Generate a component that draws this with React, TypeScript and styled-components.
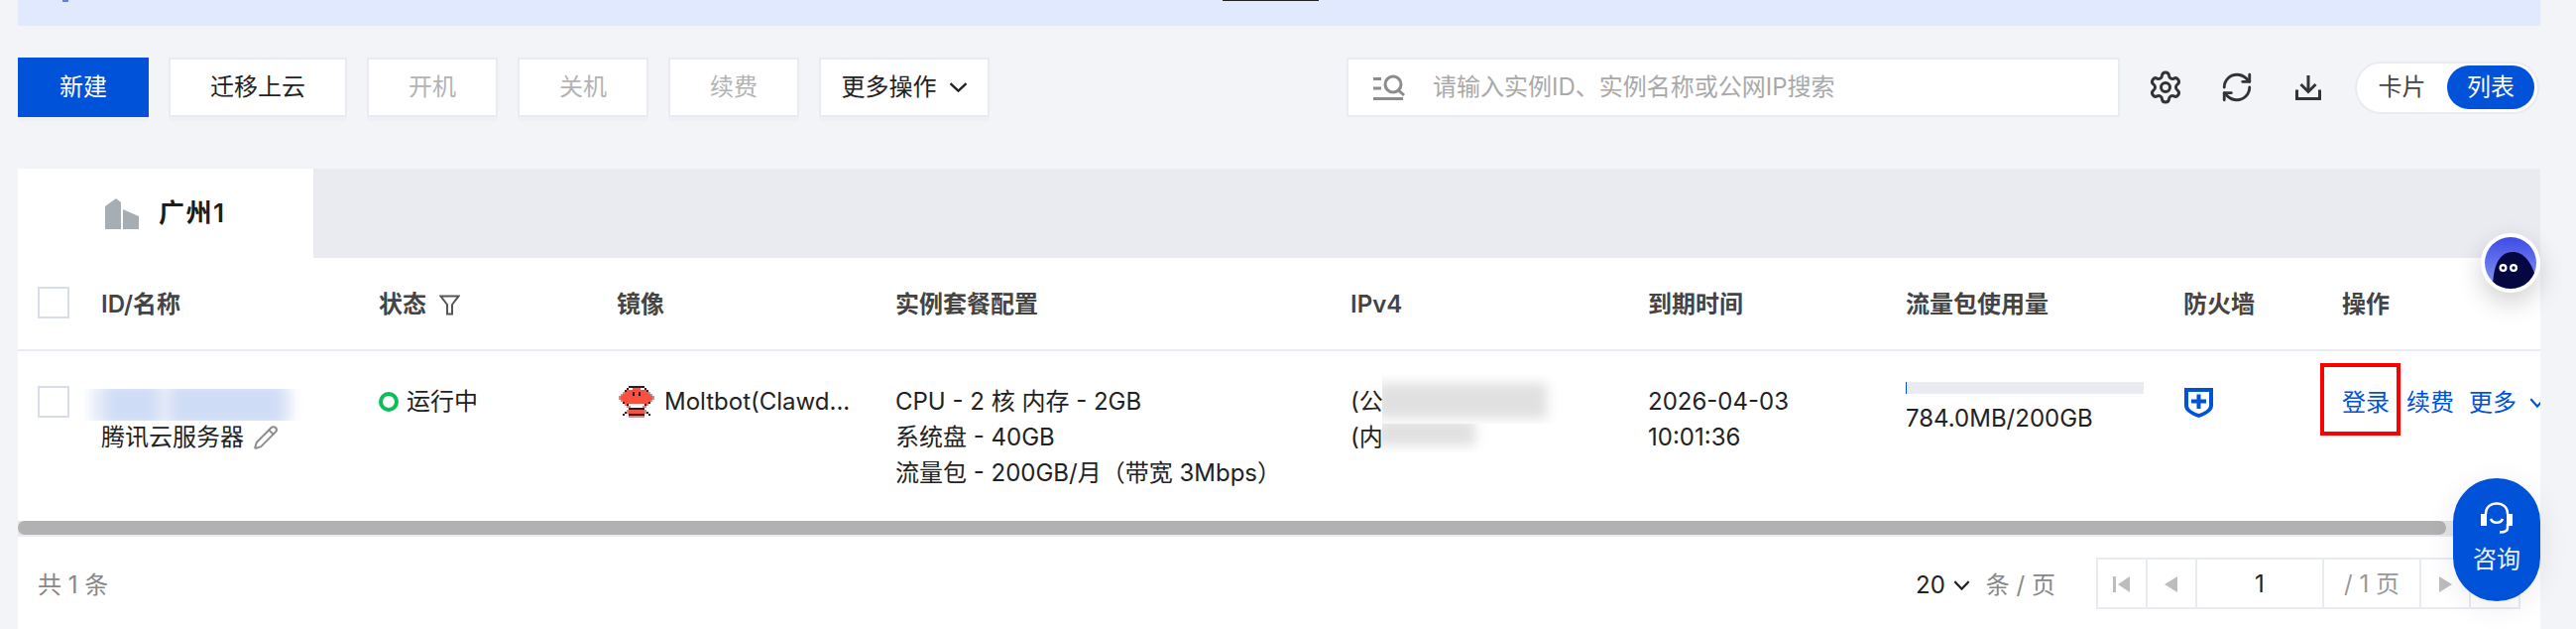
import React from "react";
import styled, { createGlobalStyle } from "styled-components";
import { Settings, RefreshCw, Pencil } from "lucide-react";

const Global = createGlobalStyle`
  html, body { margin: 0; padding: 0; background: #f3f4f8; overflow: hidden; }
  * { box-sizing: border-box; }
`;

const Page = styled.div`
  position: relative;
  width: 2598px;
  height: 634px;
  overflow: hidden;
  padding: 0 36px 0 18px;
  background: #f3f4f8;
  color: #222;
  font-family: "Inter", "Noto Sans CJK SC", sans-serif;
  font-size: 24px;
  line-height: 36px;
`;

const Banner = styled.div`
  display: flex;
  align-items: flex-start;
  height: 26px;
  background: #e0e9fe;
  padding-left: 45px;
`;
const BannerIcon = styled.span`
  width: 6px;
  height: 2px;
  background: #5b82ea;
`;
const BannerLink = styled.span`
  width: 97px;
  height: 1px;
  margin-left: 1164px;
  background: #222;
`;

const Toolbar = styled.div`
  display: flex;
  align-items: center;
  height: 60px;
  margin-top: 32px;
`;
const ButtonGroup = styled.div`
  display: flex;
  gap: 20px;
`;
const Button = styled.div<{ $w: number; $variant?: "primary" | "disabled" }>`
  display: flex;
  align-items: center;
  justify-content: center;
  gap: 12px;
  width: ${(p) => p.$w}px;
  height: 60px;
  border: 2px solid ${(p) => (p.$variant === "primary" ? "#0052d9" : "#e8ebf2")};
  background: ${(p) => (p.$variant === "primary" ? "#0052d9" : "#fff")};
  color: ${(p) => (p.$variant === "primary" ? "#fff" : p.$variant === "disabled" ? "#b3b3b3" : "#222")};
  box-shadow: 0 4px 0 #eff0f5;
`;
const SearchBox = styled.div`
  display: flex;
  align-items: center;
  gap: 28px;
  width: 780px;
  height: 60px;
  margin-left: auto;
  padding-left: 25px;
  border: 2px solid #e8ebf2;
  background: #fff;
  color: #a9a9a9;
`;
const IconCell = styled.div`
  display: flex;
  align-items: center;
  justify-content: center;
  width: 72px;
  height: 60px;
  color: #333;
`;
const IconRow = styled.div`
  display: flex;
  margin-left: 10px;
`;
const Toggle = styled.div`
  display: flex;
  align-items: center;
  width: 186px;
  height: 53px;
  margin: 0 1px 0 11px;
  padding-right: 3px;
  border: 2px solid #e8ebf2;
  border-radius: 27px;
  background: #fff;
`;
const ToggleItem = styled.div<{ $active?: boolean }>`
  display: flex;
  align-items: center;
  justify-content: center;
  flex: ${(p) => (p.$active ? "0 0 88px" : "1")};
  height: 44px;
  border-radius: 22px;
  background: ${(p) => (p.$active ? "#0052d9" : "transparent")};
  color: ${(p) => (p.$active ? "#fff" : "#444")};
`;

const Panel = styled.div`
  margin-top: 52px;
  background: #fff;
  height: 464px;
  overflow: hidden;
`;
const TabStrip = styled.div`
  height: 90px;
  background: #eaebf0;
`;
const Tab = styled.div`
  display: flex;
  align-items: center;
  gap: 20px;
  width: 298px;
  height: 90px;
  padding-left: 88px;
  background: #fff;
  font-size: 26px;
  font-weight: 600;
  letter-spacing: 1.5px;
  color: #1c1c1c;
`;

const columns = "64px 280px 240px 281px 459px 300px 260px 280px 160px 200px";
const HeaderRow = styled.div`
  display: grid;
  grid-template-columns: ${columns};
  align-items: center;
  height: 94px;
  padding: 0 0 0 20px;
  border-bottom: 2px solid #e8ebf2;
  font-weight: 600;
  color: #444;
`;
const HeaderCell = styled.div`
  display: flex;
  align-items: center;
  gap: 13px;
  padding-top: 2px;
`;
const Check = styled.div`
  width: 32px;
  height: 32px;
  border: 2px solid #d8dee9;
  background: #fff;
`;
const HeaderCheck = styled(Check)`
  margin-top: -3px;
`;
const DataRow = styled.div`
  display: grid;
  grid-template-columns: ${columns};
  align-items: start;
  height: 171px;
  padding: 33px 0 0 20px;
`;
const CheckWrap = styled.div`
  padding-top: 2px;
`;
const Patched = styled.div`
  position: relative;
  height: 36px;
`;
const BlurPatch = styled.div<{ $l: number; $t: number; $w: number; $h: number }>`
  position: absolute;
  left: ${(p) => p.$l}px;
  top: ${(p) => p.$t}px;
  width: ${(p) => p.$w}px;
  height: ${(p) => p.$h}px;
  overflow: hidden;
`;
const Blob = styled.div<{ $l: number; $t: number; $w: number; $h: number; $c: string }>`
  position: absolute;
  left: ${(p) => p.$l}px;
  top: ${(p) => p.$t}px;
  width: ${(p) => p.$w}px;
  height: ${(p) => p.$h}px;
  background: ${(p) => p.$c};
  filter: blur(6px);
`;
const NameLine = styled.div`
  display: flex;
  align-items: center;
  gap: 9px;
  color: #222;
`;
const StatusCell = styled.div`
  display: flex;
  align-items: center;
  gap: 8px;
`;
const Ring = styled.span`
  width: 20px;
  height: 20px;
  border: 4px solid #0abf5b;
  border-radius: 50%;
`;
const ImageCell = styled.div`
  display: flex;
  align-items: center;
  gap: 10px;
  margin-left: 2px;
  white-space: nowrap;
`;
const UsageCell = styled.div`
  margin-top: -2px;
`;
const UsageBar = styled.div`
  width: 240px;
  height: 12px;
  background: #e9ebf1;
`;
const UsageFill = styled.div`
  height: 100%;
  background: #0052d9;
`;
const UsageText = styled.div`
  margin-top: 7px;
`;
const ShieldWrap = styled.div`
  padding: 4px 0 0 1px;
  line-height: 0;
`;
const Ops = styled.div`
  display: flex;
  align-items: center;
  margin-top: 1px;
  color: #0052d9;
`;
const OpLink = styled.span<{ $ml?: number }>`
  position: relative;
  margin-left: ${(p) => p.$ml ?? 0}px;
  white-space: nowrap;
`;
const LoginLink = styled(OpLink)`
  &::after {
    content: "";
    position: absolute;
    left: -22px;
    right: -11px;
    top: -22px;
    height: 65px;
    border: 4px solid #f00;
  }
`;
const MoreChevron = styled.span`
  display: flex;
  margin-left: 13px;
`;

const ScrollTrack = styled.div`
  height: 14px;
  background: #e4e4e4;
`;
const ScrollThumb = styled.div`
  width: 2449px;
  height: 14px;
  border-radius: 7px;
  background: #b1b1b1;
`;
const Footer = styled.div`
  display: flex;
  align-items: center;
  height: 95px;
  padding: 0 20px;
  border-top: 2px solid #e8ebf2;
`;
const Total = styled.div`
  padding-top: 5px;
  color: #888;
`;
const PageSize = styled.div`
  display: flex;
  align-items: center;
  gap: 8px;
  margin-left: auto;
  padding-top: 4px;
`;
const Unit = styled.span`
  margin-left: 8px;
  color: #888;
`;
const Pager = styled.div`
  display: flex;
  height: 52px;
  margin-left: 41px;
  border: 2px solid #e8ebf2;
`;
const PagerCell = styled.div<{ $w: number; $muted?: boolean }>`
  display: flex;
  align-items: center;
  justify-content: center;
  width: ${(p) => p.$w}px;
  padding-top: 2px;
  border-right: 2px solid #e8ebf2;
  color: ${(p) => (p.$muted ? "#999" : "#222")};
  &:last-child { border-right: 0; }
`;

const Avatar = styled.div`
  position: absolute;
  left: 2502px;
  top: 235px;
  width: 60px;
  height: 60px;
  padding: 4px;
  border-radius: 50%;
  background: #fff;
  box-shadow: 0 10px 26px rgba(0, 0, 0, 0.18);
  line-height: 0;
`;
const Consult = styled.div`
  position: absolute;
  left: 2474px;
  top: 482px;
  display: flex;
  flex-direction: column;
  align-items: center;
  width: 88px;
  height: 124px;
  padding-top: 24px;
  border-radius: 44px;
  background: #0052d9;
  color: #fff;
  box-shadow: 0 6px 30px rgba(0, 0, 0, 0.08);
`;
const ConsultText = styled.div`
  margin-top: 8px;
  color: #eef3ff;
`;

const pixels = [
  ".....dddddddd.....",
  "....dwwRRRRwwd....",
  "...dRRRRRRRRRRd...",
  "..pRRRRkRRkRRRRp..",
  ".pRRRRRkRRkRRRRRp.",
  "pRRRRRRRRRRRRRRRRp",
  "pRRRRRRRRRRRRRRRRp",
  ".pRRRRRRRRRRRRRRp.",
  "..dRRRRRRRRRRRRd..",
  "...pdwwwwwwwwdp...",
  "....ppwwwwwwpp....",
  ".....dddddddd.....",
  "....pRRRRRRRRp....",
  "...dpRRRRRRRRpd...",
  "..d..dddddddd..d..",
  ".....pppppppp.....",
];
const pixelColors: Record<string, string> = {
  d: "#4a1014",
  R: "#f9503f",
  w: "#ffffff",
  p: "#c58f8d",
  k: "#2a0b0b",
};
const PixelBot = () => (
  <svg width="36" height="33" viewBox="0 0 18 16.5" shapeRendering="crispEdges" style={{ display: "block" }}>
    {pixels.flatMap((row, y) =>
      row.split("").map((c, x) =>
        c === "." ? null : <rect key={`${x}-${y}`} x={x} y={y} width="1" height="1" fill={pixelColors[c]} />
      )
    )}
  </svg>
);

const Chevron = ({ w = 19, h = 10, c = "#222" }: { w?: number; h?: number; c?: string }) => (
  <svg width={w} height={h} viewBox="0 0 19 10" fill="none" stroke={c} strokeWidth="2.4" preserveAspectRatio="none">
    <path d="M1.5 1.2L9.5 8.6L17.5 1.2" />
  </svg>
);
const SearchIcon = () => (
  <svg width="32" height="26" viewBox="0 0 32 26" fill="none" stroke="#8c8c8c" strokeWidth="3">
    <path d="M0 4.5H8M0 14H8M0 24.5H30" />
    <circle cx="20" cy="10" r="8" />
    <path d="M25.5 16L31 21" />
  </svg>
);
const DownloadIcon = () => (
  <svg width="26" height="25" viewBox="0 0 26 25" fill="none" stroke="#333" strokeWidth="3">
    <path d="M13 0V16M5.5 9L13 16.5L20.5 9M1.5 14.5V23.5H24.5V14.5" />
  </svg>
);
const FilterIcon = () => (
  <svg width="21" height="21" viewBox="0 0 21 21" fill="none" stroke="#555" strokeWidth="2">
    <path d="M1.5 1.5H19.5L13 10V19.5H8V10Z" />
  </svg>
);
const BuildingIcon = () => (
  <svg width="34" height="31" viewBox="0 0 34 31" fill="#a6aeb3">
    <path d="M0 8L11 0L16 4V31H0Z" />
    <path d="M18 11L34 18V31H18Z" />
  </svg>
);
const ShieldIcon = () => (
  <svg width="29" height="30" viewBox="0 0 29 30">
    <path d="M0 0H29V18C29 24 20 28 14.5 30C9 28 0 24 0 18Z" fill="#0052d9" />
    <path d="M4 4H25V17.5C25 22 19 24.5 14.5 26C10 24.5 4 22 4 17.5Z" fill="#fff" />
    <path d="M12.5 6.5H16.5V11.5H22V15.5H16.5V21H12.5V15.5H7V11.5H12.5Z" fill="#0052d9" />
  </svg>
);
const PagerIcon = ({ kind }: { kind: "first" | "prev" | "next" | "last" }) => (
  <svg width="18" height="16" viewBox="0 0 18 16" fill="#bdbdbd">
    {kind === "first" && <path d="M0 0H3V16H0ZM17 0V16L5 8Z" />}
    {kind === "prev" && <path d="M15 0V16L2 8Z" />}
    {kind === "next" && <path d="M3 0V16L16 8Z" />}
    {kind === "last" && <path d="M15 0H18V16H15ZM1 0V16L13 8Z" />}
  </svg>
);
const AvatarArt = () => (
  <svg width="52" height="52" viewBox="0 0 52 52">
    <defs>
      <linearGradient id="av" x1="0" y1="0" x2="0" y2="1">
        <stop offset="0" stopColor="#3d4be6" />
        <stop offset="1" stopColor="#8a9cf2" />
      </linearGradient>
      <clipPath id="avc">
        <circle cx="26" cy="26" r="26" />
      </clipPath>
    </defs>
    <g clipPath="url(#avc)">
      <rect width="52" height="52" fill="url(#av)" />
      <path d="M8 52C8 30 14 15 28 15C42 15 49 30 53 46V52Z" fill="#050840" />
      <circle cx="18.5" cy="31" r="4" fill="#fff" />
      <circle cx="29" cy="31" r="4" fill="#fff" />
      <circle cx="18.5" cy="31" r="1.7" fill="#050840" />
      <circle cx="29" cy="31" r="1.7" fill="#050840" />
    </g>
  </svg>
);
const HeadsetIcon = () => (
  <svg width="32" height="32" viewBox="0 0 32 32" fill="none" stroke="#fff" strokeWidth="2.6">
    <path d="M5 12C5 5 10 1.5 16 1.5C22 1.5 27 5 27 12" />
    <path d="M27 22V26C27 29 24 30.5 19 30.5" />
    <path d="M10 17C12 22 20 22 22 17" />
    <rect x="0" y="12" width="6" height="12" fill="#fff" stroke="none" />
    <rect x="26" y="12" width="6" height="12" fill="#fff" stroke="none" />
  </svg>
);

export default function App() {
  return (
    <>
      <Global />
      <Page>
        <Banner>
          <BannerIcon />
          <BannerLink />
        </Banner>

        <Toolbar>
          <ButtonGroup>
            <Button $w={132} $variant="primary">新建</Button>
            <Button $w={180}>迁移上云</Button>
            <Button $w={132} $variant="disabled">开机</Button>
            <Button $w={132} $variant="disabled">关机</Button>
            <Button $w={132} $variant="disabled">续费</Button>
            <Button $w={172}>
              更多操作
              <Chevron />
            </Button>
          </ButtonGroup>
          <SearchBox>
            <SearchIcon />
            <span>请输入实例ID、实例名称或公网IP搜索</span>
          </SearchBox>
          <IconRow>
            <IconCell><Settings size={36} strokeWidth={2} /></IconCell>
            <IconCell><RefreshCw size={34} strokeWidth={2} /></IconCell>
            <IconCell><DownloadIcon /></IconCell>
          </IconRow>
          <Toggle>
            <ToggleItem>卡片</ToggleItem>
            <ToggleItem $active>列表</ToggleItem>
          </Toggle>
        </Toolbar>

        <Panel>
          <TabStrip>
            <Tab>
              <BuildingIcon />
              <span>广州1</span>
            </Tab>
          </TabStrip>

          <HeaderRow>
            <HeaderCheck />
            <HeaderCell>ID/名称</HeaderCell>
            <HeaderCell>状态<FilterIcon /></HeaderCell>
            <HeaderCell>镜像</HeaderCell>
            <HeaderCell>实例套餐配置</HeaderCell>
            <HeaderCell>IPv4</HeaderCell>
            <HeaderCell>到期时间</HeaderCell>
            <HeaderCell>流量包使用量</HeaderCell>
            <HeaderCell>防火墙</HeaderCell>
            <HeaderCell>操作</HeaderCell>
          </HeaderRow>

          <DataRow>
            <CheckWrap><Check /></CheckWrap>
            <div>
              <Patched>
                <BlurPatch $l={-17} $t={5} $w={222} $h={32}>
                  <Blob $l={6} $t={-4} $w={204} $h={40} $c="#e6ecf9" />
                  <Blob $l={22} $t={-4} $w={52} $h={40} $c="#cfdcf5" />
                  <Blob $l={88} $t={-4} $w={112} $h={40} $c="#cfdcf5" />
                </BlurPatch>
              </Patched>
              <NameLine>
                腾讯云服务器
                <Pencil size={26} color="#8c8c8c" strokeWidth={1.8} />
              </NameLine>
            </div>
            <StatusCell><Ring />运行中</StatusCell>
            <ImageCell><PixelBot />Moltbot(Clawd...</ImageCell>
            <div>
              <div>CPU - 2 核 内存 - 2GB</div>
              <div>系统盘 - 40GB</div>
              <div>流量包 - 200GB/月（带宽 3Mbps）</div>
            </div>
            <div>
              <Patched>
                (公
                <BlurPatch $l={32} $t={-9} $w={177} $h={49}>
                  <Blob $l={-6} $t={8} $w={172} $h={36} $c="#e0e0e0" />
                </BlurPatch>
              </Patched>
              <Patched>
                (内
                <BlurPatch $l={32} $t={4} $w={108} $h={29}>
                  <Blob $l={-6} $t={-4} $w={100} $h={26} $c="#e0e0e0" />
                </BlurPatch>
              </Patched>
            </div>
            <div>
              <div>2026-04-03</div>
              <div>10:01:36</div>
            </div>
            <UsageCell>
              <UsageBar>
                <UsageFill style={{ width: `${(784 / (200 * 1024)) * 100}%`, minWidth: 1 }} />
              </UsageBar>
              <UsageText>784.0MB/200GB</UsageText>
            </UsageCell>
            <ShieldWrap><ShieldIcon /></ShieldWrap>
            <Ops>
              <LoginLink>登录</LoginLink>
              <OpLink $ml={17}>续费</OpLink>
              <OpLink $ml={15}>更多</OpLink>
              <MoreChevron><Chevron w={16} h={10} c="#0052d9" /></MoreChevron>
            </Ops>
          </DataRow>

          <ScrollTrack><ScrollThumb /></ScrollTrack>

          <Footer>
            <Total>共 1 条</Total>
            <PageSize>
              20
              <Chevron w={17} h={10} />
              <Unit>条 / 页</Unit>
            </PageSize>
            <Pager>
              <PagerCell $w={50}><PagerIcon kind="first" /></PagerCell>
              <PagerCell $w={50}><PagerIcon kind="prev" /></PagerCell>
              <PagerCell $w={128}>1</PagerCell>
              <PagerCell $w={98} $muted>/ 1 页</PagerCell>
              <PagerCell $w={50}><PagerIcon kind="next" /></PagerCell>
              <PagerCell $w={48}><PagerIcon kind="last" /></PagerCell>
            </Pager>
          </Footer>
        </Panel>

        <Avatar><AvatarArt /></Avatar>
        <Consult>
          <HeadsetIcon />
          <ConsultText>咨询</ConsultText>
        </Consult>
      </Page>
    </>
  );
}
